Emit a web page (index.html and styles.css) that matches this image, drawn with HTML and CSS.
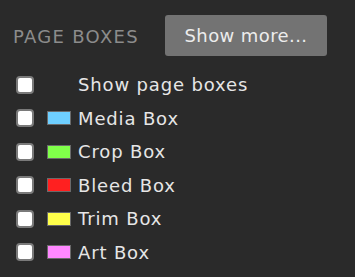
FILE: index.html
```html
<!DOCTYPE html>
<html>
<head>
<meta charset="utf-8">
<link rel="stylesheet" href="styles.css">
</head>
<body>
<div class="panel">
  <div class="header">
    <span class="title">PAGE BOXES</span>
    <button class="more">Show more...</button>
  </div>
  <ul class="list">
    <li class="row"><input type="checkbox" class="check"><span class="swatch none"></span><span class="label">Show page boxes</span></li>
    <li class="row"><input type="checkbox" class="check"><span class="swatch media"></span><span class="label">Media Box</span></li>
    <li class="row"><input type="checkbox" class="check"><span class="swatch crop"></span><span class="label">Crop Box</span></li>
    <li class="row"><input type="checkbox" class="check"><span class="swatch bleed"></span><span class="label">Bleed Box</span></li>
    <li class="row"><input type="checkbox" class="check"><span class="swatch trim"></span><span class="label">Trim Box</span></li>
    <li class="row"><input type="checkbox" class="check"><span class="swatch art"></span><span class="label">Art Box</span></li>
  </ul>
</div>
</body>
</html>
```
FILE: styles.css
```css
html, body {
  margin: 0;
  padding: 0;
  background: #2a2a2a;
  width: 355px;
  height: 277px;
  overflow: hidden;
}
.panel {
  font-family: "DejaVu Sans", sans-serif;
  padding: 15px 0 0 13px;
}
.header {
  display: flex;
  align-items: center;
  height: 41px;
}
.title {
  color: #8c8c8c;
  font-size: 18px;
  width: 152px;
  letter-spacing: 1.3px;
  padding-top: 1px;
}
.more {
  width: 162px;
  height: 41px;
  border: none;
  border-radius: 3px;
  background: #737373;
  color: #ececec;
  font-family: "DejaVu Sans", sans-serif;
  font-size: 18px;
  letter-spacing: 0.4px;
  padding: 0;
}
.list {
  list-style: none;
  margin: 12px 0 0 3px;
  padding: 0;
}
.row {
  display: flex;
  align-items: center;
  height: 33.5px;
}
.check {
  appearance: none;
  -webkit-appearance: none;
  margin: 0;
  width: 18px;
  height: 18px;
  background: #fff;
  border: 2px solid #7a7a7a;
  border-radius: 4px;
  box-sizing: border-box;
}
.swatch {
  width: 24px;
  height: 14px;
  margin-left: 13px;
  box-sizing: border-box;
  border: 1px solid #6a6a6a;
}
.swatch.none { border: none; }
.media { background: #6ecfff; }
.crop { background: #80ff4a; }
.bleed { background: #ff2020; }
.trim { background: #ffff4a; }
.art { background: #ff88ff; }
.label {
  margin-left: 7px;
  color: #e6e6e6;
  font-size: 18px;
  letter-spacing: 0.85px;
}
```
